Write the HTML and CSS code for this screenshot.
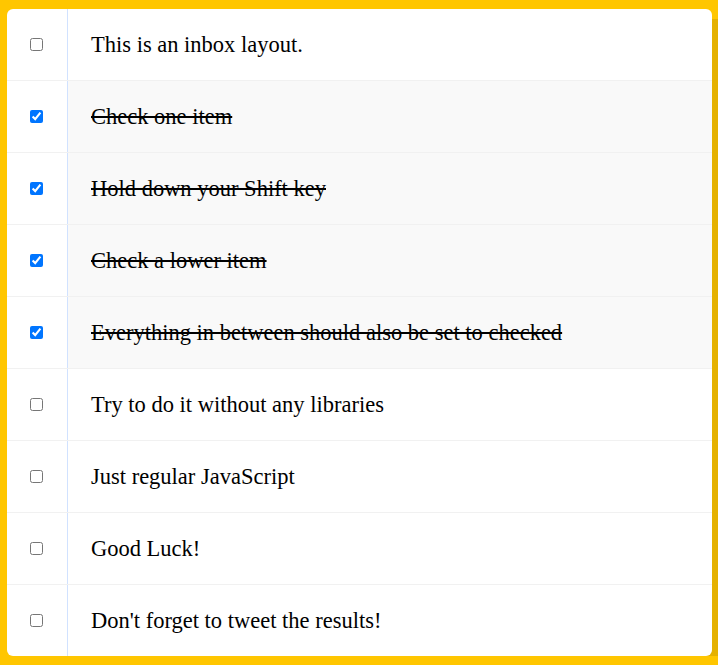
FILE: index.html
```html
<!DOCTYPE html>
<html>
<head>
<meta charset="utf-8">
<link rel="stylesheet" href="styles.css">
</head>
<body>
<div class="inbox">
  <div class="item"><input type="checkbox"><p>This is an inbox layout.</p></div>
  <div class="item"><input type="checkbox" checked><p>Check one item</p></div>
  <div class="item"><input type="checkbox" checked><p>Hold down your Shift key</p></div>
  <div class="item"><input type="checkbox" checked><p>Check a lower item</p></div>
  <div class="item"><input type="checkbox" checked><p>Everything in between should also be set to checked</p></div>
  <div class="item"><input type="checkbox"><p>Try to do it without any libraries</p></div>
  <div class="item"><input type="checkbox"><p>Just regular JavaScript</p></div>
  <div class="item"><input type="checkbox"><p>Good Luck!</p></div>
  <div class="item"><input type="checkbox"><p>Don't forget to tweet the results!</p></div>
</div>
</body>
</html>
```
FILE: styles.css
```css
html {
  background: #ffc600;
  font-family: "Liberation Serif", "Times New Roman", serif;
}
body {
  margin: 0;
  overflow: hidden;
}
.inbox {
  width: 705px;
  margin: 9px 0 0 7px;
  background: #fff;
  border-radius: 6px;
  box-shadow: 11px 10px 0 rgba(0, 0, 0, 0.1);
  overflow: hidden;
}
.item {
  display: flex;
  align-items: center;
  border-bottom: 1px solid #f1f1f1;
}
.item:last-child {
  border-bottom: 0;
}
.item input[type="checkbox"] {
  margin: 0 24px 0 23px;
  width: 13px;
  height: 13px;
}
.item p {
  margin: 0;
  padding: 23px;
  flex: 1;
  font-size: 22.5px;
  line-height: 25px;
  color: #000;
  border-left: 1px solid #d1e2ff;
}
.item input:checked + p {
  background: #f9f9f9;
  text-decoration: line-through;
}
```
